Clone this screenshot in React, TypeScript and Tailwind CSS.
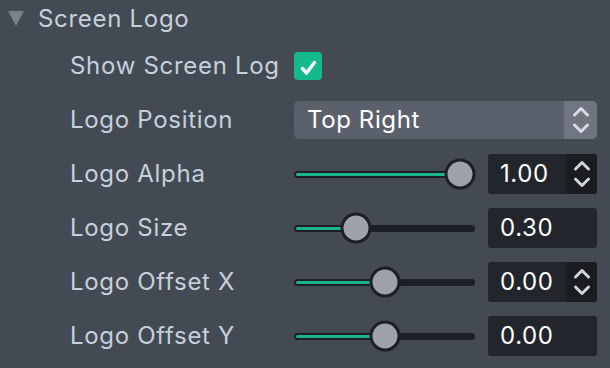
import React from "react";

const font = { fontFamily: "Inter, 'Noto Sans', sans-serif" };

function Chevrons({ color = "#cfd4da" }: { color?: string }) {
  return (
    <svg width="18" height="30" viewBox="0 0 18 30" fill="none">
      <path d="M2.5 10 L9 3.5 L15.5 10" stroke={color} strokeWidth="3" strokeLinecap="round" strokeLinejoin="round" />
      <path d="M2.5 20 L9 26.5 L15.5 20" stroke={color} strokeWidth="3" strokeLinecap="round" strokeLinejoin="round" />
    </svg>
  );
}

function Slider({ pos }: { pos: number }) {
  return (
    <div className="relative w-[181px] h-[7px] rounded-full bg-[#1c1f25]">
      <div className="absolute left-[2px] top-[2px] h-[3px] rounded-full bg-[#19b48b]" style={{ width: pos - 2 }} />
      <div
        className="absolute top-1/2 w-[31px] h-[31px] -translate-x-1/2 -translate-y-1/2 rounded-full border-[3px] border-[#1c1f25] bg-[#9ea3aa]"
        style={{ left: pos }}
      />
    </div>
  );
}

function Spin({ value, arrows }: { value: string; arrows: boolean }) {
  return (
    <div className="flex w-[109px] h-[40px] rounded-[3px] overflow-hidden bg-[#22252b]">
      <div className="flex-1 flex items-center pl-[12px] text-white text-[24px] tracking-[0.6px]">{value}</div>
      {arrows && (
        <div className="w-[31px] flex items-center justify-center bg-[#1a1c20]">
          <Chevrons />
        </div>
      )}
    </div>
  );
}

function Row({ label, children }: { label: string; children: React.ReactNode }) {
  return (
    <div className="flex items-center h-[54px]">
      <div className="w-[294px] pl-[70px] text-[#c4d1db] text-[24px] tracking-[0.7px]">{label}</div>
      {children}
    </div>
  );
}

function SliderRow({ label, pos, value, arrows }: { label: string; pos: number; value: string; arrows: boolean }) {
  return (
    <Row label={label}>
      <Slider pos={pos} />
      <div className="ml-[13px]">
        <Spin value={value} arrows={arrows} />
      </div>
    </Row>
  );
}

export default function App() {
  return (
    <div className="w-[610px] h-[368px] bg-[#444a53] overflow-hidden" style={font}>
      <div className="flex items-center h-[39px] pb-[2px]">
        <div className="w-[38px] pl-[8px]">
          <svg width="16" height="15" viewBox="0 0 16 15">
            <path d="M0 0 H16 L8 15 Z" fill="#7a808a" />
          </svg>
        </div>
        <span className="text-[#c4d1db] text-[24px] tracking-[0.7px]">Screen Logo</span>
      </div>
      <Row label="Show Screen Log">
        <div className="w-[28px] h-[28px] rounded-[4px] bg-[#16b98b]">
          <svg width="28" height="28" viewBox="0 0 28 28" fill="none">
            <path d="M8.5 16.5 L12.5 21 L20.5 10.5" stroke="white" strokeWidth="3.4" strokeLinecap="round" strokeLinejoin="round" />
          </svg>
        </div>
      </Row>
      <Row label="Logo Position">
        <div className="flex w-[303px] h-[38px] rounded-[5px] overflow-hidden bg-[#5a616d]">
          <div className="flex-1 flex items-center pl-[13px] text-white text-[24px] tracking-[0.6px]">Top Right</div>
          <div className="w-[33px] flex items-center justify-center bg-[#6f7682]">
            <Chevrons color="#d9dde2" />
          </div>
        </div>
      </Row>
      <SliderRow label="Logo Alpha" pos={166} value="1.00" arrows />
      <SliderRow label="Logo Size" pos={62} value="0.30" arrows={false} />
      <SliderRow label="Logo Offset X" pos={91} value="0.00" arrows />
      <SliderRow label="Logo Offset Y" pos={91} value="0.00" arrows={false} />
    </div>
  );
}
